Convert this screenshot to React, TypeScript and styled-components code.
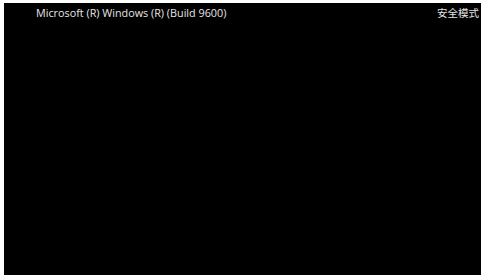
import styled, { createGlobalStyle } from "styled-components";

const Global = createGlobalStyle`
    html, body {
        margin: 0;
        padding: 0;
        background: #ffffff;
        overflow: hidden;
    }
`;

const Frame = styled.div`
    width: 483px;
    height: 275px;
    box-sizing: border-box;
    padding: 3px 2px 0 4px;
    background: #ffffff;
`;

const Screen = styled.div`
    height: 100%;
    background: #000000;
    display: flex;
    justify-content: space-between;
    align-items: flex-start;
    padding: 3px 2px 0 32px;
    box-sizing: border-box;
`;

const Label = styled.div<{ $cjk?: boolean }>`
    color: #e6e6e6;
    font-family: "Open Sans", ${(p) => (p.$cjk ? '"Noto Sans CJK SC",' : "")} sans-serif;
    font-size: ${(p) => (p.$cjk ? "10.5px" : "10.8px")};
    line-height: 14px;
    white-space: nowrap;
`;

const App = () => {
    return (
        <Frame>
            <Global />
            <Screen>
                <Label>Microsoft (R) Windows (R) (Build 9600)</Label>
                <Label $cjk>安全模式</Label>
            </Screen>
        </Frame>
    );
};

export default App;
